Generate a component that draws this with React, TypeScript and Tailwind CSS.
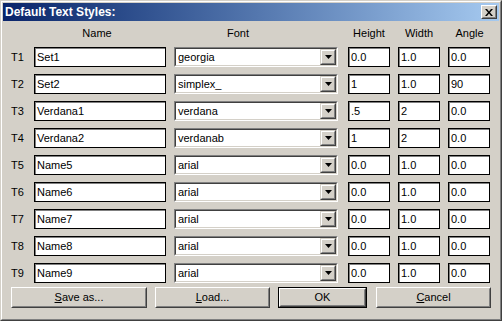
import React from "react";

const rows = [
  { t: "T1", name: "Set1", font: "georgia", h: "0.0", w: "1.0", a: "0.0" },
  { t: "T2", name: "Set2", font: "simplex_", h: "1", w: "1.0", a: "90" },
  { t: "T3", name: "Verdana1", font: "verdana", h: ".5", w: "2", a: "0.0" },
  { t: "T4", name: "Verdana2", font: "verdanab", h: "1", w: "2", a: "0.0" },
  { t: "T5", name: "Name5", font: "arial", h: "0.0", w: "1.0", a: "0.0" },
  { t: "T6", name: "Name6", font: "arial", h: "0.0", w: "1.0", a: "0.0" },
  { t: "T7", name: "Name7", font: "arial", h: "0.0", w: "1.0", a: "0.0" },
  { t: "T8", name: "Name8", font: "arial", h: "0.0", w: "1.0", a: "0.0" },
  { t: "T9", name: "Name9", font: "arial", h: "0.0", w: "1.0", a: "0.0" },
];

function Edit({ value, w }: { value: string; w: string }) {
  return (
    <div
      className={`${w} h-[20px] bg-white border border-black shadow-[inset_1px_1px_0_#808080] flex items-center pl-[2px] leading-none`}
    >
      {value}
    </div>
  );
}

function Combo({ value }: { value: string }) {
  return (
    <div className="w-[164px] h-[20px] border border-t-[#808080] border-l-[#808080] border-r-white border-b-white">
      <div className="h-full border border-t-[#404040] border-l-[#404040] border-r-[#d4d0c8] border-b-[#d4d0c8] bg-white flex items-center">
        <div className="flex-1 pl-[2px] leading-none">{value}</div>
        <div className="w-[16px] h-[16px] border border-t-[#d4d0c8] border-l-[#d4d0c8] border-r-[#404040] border-b-[#404040]">
          <div className="h-full border border-t-white border-l-white border-r-[#808080] border-b-[#808080] bg-[#d4d0c8] flex items-center justify-center">
            <svg width="7" height="4" viewBox="0 0 7 4">
              <path d="M0 0H7L3.5 4Z" fill="#000" />
            </svg>
          </div>
        </div>
      </div>
    </div>
  );
}

function Btn({
  children,
  w,
  def,
}: {
  children: React.ReactNode;
  w: string;
  def?: boolean;
}) {
  const inner = (
    <div className="h-full border border-t-white border-l-white border-r-[#404040] border-b-[#404040]">
      <div className="h-full border border-t-[#d4d0c8] border-l-[#d4d0c8] border-r-[#808080] border-b-[#808080] flex items-center justify-center leading-none">
        {children}
      </div>
    </div>
  );
  return def ? (
    <div className={`${w} h-[21px] border border-black`}>{inner}</div>
  ) : (
    <div className={`${w} h-[21px]`}>{inner}</div>
  );
}

export default function App() {
  return (
    <div
      className="w-[502px] h-[321px] bg-[#d4d0c8] border border-t-[#d4d0c8] border-l-[#d4d0c8] border-r-[#404040] border-b-[#404040] text-[11px] text-black"
      style={{ fontFamily: '"Liberation Sans", Arial, sans-serif' }}
    >
      <div className="h-full border border-t-white border-l-white border-r-[#808080] border-b-[#808080] p-[1px] flex flex-col">
        <div className="h-[18px] bg-gradient-to-r from-[#0a246a] to-[#a6caf0] flex items-center justify-between pl-[2px] pr-[2px]">
          <span className="text-white font-bold text-[12px] leading-none">Default Text Styles:</span>
          <div className="w-[16px] h-[14px] border border-t-white border-l-white border-r-[#404040] border-b-[#404040] bg-[#d4d0c8]">
            <div className="h-full border border-t-[#d4d0c8] border-l-[#d4d0c8] border-r-[#808080] border-b-[#808080] flex items-center justify-center">
              <svg width="8" height="7" viewBox="0 0 8 7">
                <path d="M0 0H2L4 2.5L6 0H8L5 3.5L8 7H6L4 4.5L2 7H0L3 3.5Z" fill="#000" />
              </svg>
            </div>
          </div>
        </div>

        <div className="flex items-center h-[14px] mt-[5px] leading-none">
          <div className="w-[31px]" />
          <div className="w-[132px] text-center pr-[6px]">Name</div>
          <div className="w-[164px] ml-[8px] pl-[53px]">Font</div>
          <div className="w-[42px] ml-[10px] text-center">Height</div>
          <div className="w-[42px] ml-[8px] text-center">Width</div>
          <div className="w-[42px] ml-[8px] text-center pl-[1px]">Angle</div>
        </div>

        <div className="flex flex-col gap-[7px] mt-[7px]">
          {rows.map((r) => (
            <div key={r.t} className="flex items-center h-[20px]">
              <div className="w-[31px] pl-[8px] leading-none">{r.t}</div>
              <Edit value={r.name} w="w-[132px]" />
              <div className="ml-[8px]">
                <Combo value={r.font} />
              </div>
              <div className="ml-[10px]">
                <Edit value={r.h} w="w-[42px]" />
              </div>
              <div className="ml-[8px]">
                <Edit value={r.w} w="w-[42px]" />
              </div>
              <div className="ml-[8px]">
                <Edit value={r.a} w="w-[42px]" />
              </div>
            </div>
          ))}
        </div>

        <div className="flex items-center mt-[4px] pl-[8px]">
          <Btn w="w-[136px]">
            <span>
              <span className="underline">S</span>ave as...
            </span>
          </Btn>
          <div className="ml-[8px]">
            <Btn w="w-[115px]">
              <span>
                <span className="underline">L</span>oad...
              </span>
            </Btn>
          </div>
          <div className="ml-[8px]">
            <Btn w="w-[89px]" def>
              OK
            </Btn>
          </div>
          <div className="ml-[9px]">
            <Btn w="w-[115px]">
              <span>
                <span className="underline">C</span>ancel
              </span>
            </Btn>
          </div>
        </div>
      </div>
    </div>
  );
}
